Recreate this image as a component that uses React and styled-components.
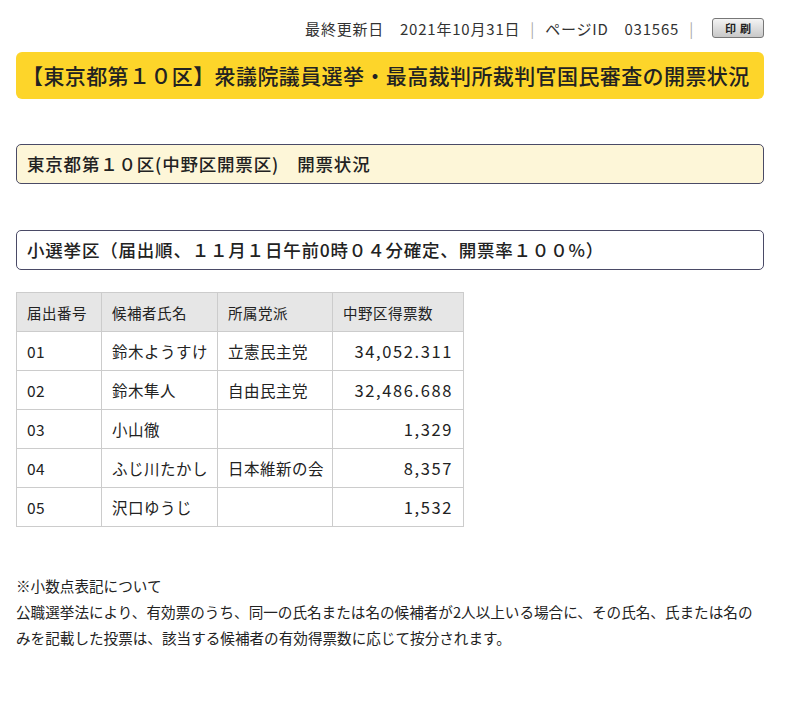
import React from "react";
import styled, { createGlobalStyle } from "styled-components";

const G = createGlobalStyle`
  body { margin: 0; background: #fff; color: #222; font-family: "Noto Sans CJK JP", "Noto Sans", sans-serif; }
`;
const Page = styled.div`padding: 14px 36px 0 16px; display: flex; flex-direction: column;`;
const Meta = styled.div`display: flex; justify-content: flex-end; align-items: center; gap: 10px; font-size: 15px; color: #333; height: 28px; letter-spacing: 0.8px;`;
const Sep = styled.span`color: #aaa;`;
const PrintBtn = styled.span`
  display: inline-block; font-size: 11px; font-weight: bold; letter-spacing: 4px; padding: 1px 8px 1px 12px;
  border: 1px solid #777; border-radius: 3px; background: linear-gradient(#f4f4f4, #c8c8c8); color: #222; margin-left: 8px;
`;
const Title = styled.h1`
  margin: 10px 0 0; background: #fdd52a; border-radius: 6px; font-size: 21px; font-weight: 500;
  line-height: 30px; padding: 8px 6px 9px 6px; color: #222; letter-spacing: 0.4px;
`;
const Sub = styled.h2`
  margin: ${p => p.$mt}px 0 0; font-size: 17.5px; font-weight: 500; line-height: 24px; padding: 7px 10px 7px;
  border: 1px solid #4a4a66; border-radius: 5px; background: ${p => p.$bg}; letter-spacing: 0.8px;
`;
const Table = styled.table`
  margin-top: 22px; border-collapse: collapse; width: 448px; font-size: 15.5px; table-layout: fixed;
  th, td { border: 1.5px solid #ccc; height: 38px; padding: 0 10px; text-align: left; font-weight: normal; white-space: nowrap; letter-spacing: 0.5px; }
  th { background: #e6e6e6; font-size: 14.5px; }
`;
const Num = styled.td`&& { text-align: right; letter-spacing: 1.6px; font-size: 16.5px; }`;
const Notes = styled.div`margin-top: 46px; font-size: 14.6px; line-height: 26px; color: #222;`;

const rows = [
  ["01", "鈴木ようすけ", "立憲民主党", "34,052.311"],
  ["02", "鈴木隼人", "自由民主党", "32,486.688"],
  ["03", "小山徹", "", "1,329"],
  ["04", "ふじ川たかし", "日本維新の会", "8,357"],
  ["05", "沢口ゆうじ", "", "1,532"],
];

export default function App() {
  return (
    <Page>
      <G />
      <Meta>
        <span>最終更新日　2021年10月31日</span><Sep>|</Sep>
        <span>ページID　031565</span><Sep>|</Sep>
        <PrintBtn>印刷</PrintBtn>
      </Meta>
      <Title>【東京都第１０区】衆議院議員選挙・最高裁判所裁判官国民審査の開票状況</Title>
      <Sub $mt={45} $bg="#fdf6d8">東京都第１０区(中野区開票区)　開票状況</Sub>
      <Sub $mt={46} $bg="#fff">小選挙区（届出順、１１月１日午前0時０４分確定、開票率１００%）</Sub>
      <Table>
        <colgroup><col style={{ width: 85 }} /><col style={{ width: 116 }} /><col style={{ width: 115 }} /><col /></colgroup>
        <thead>
          <tr><th>届出番号</th><th>候補者氏名</th><th>所属党派</th><th>中野区得票数</th></tr>
        </thead>
        <tbody>
          {rows.map(r => (
            <tr key={r[0]}><td>{r[0]}</td><td>{r[1]}</td><td>{r[2]}</td><Num>{r[3]}</Num></tr>
          ))}
        </tbody>
      </Table>
      <Notes>
        <div>※小数点表記について</div>
        <div>公職選挙法により、有効票のうち、同一の氏名または名の候補者が2人以上いる場合に、その氏名、氏または名のみを記載した投票は、該当する候補者の有効得票数に応じて按分されます。</div>
      </Notes>
    </Page>
  );
}
